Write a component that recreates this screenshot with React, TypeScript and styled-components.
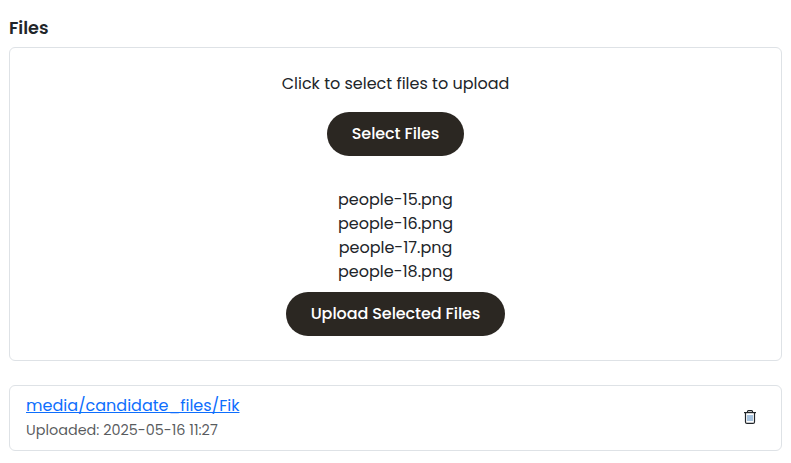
import React from "react";
import styled, { createGlobalStyle } from "styled-components";

const GlobalStyle = createGlobalStyle`
  *, *::before, *::after { box-sizing: border-box; }
  body {
    margin: 0;
    background: #fff;
    color: #212529;
    font: 400 16px/24px Poppins, Inter, sans-serif;
  }
`;

const Page = styled.main`
  padding: 16px 9px 12px;
`;

const Title = styled.h2`
  margin: 0 0 7px;
  font-size: 17.6px;
  line-height: 24px;
  font-weight: 600;
`;

const Panel = styled.section`
  border: 1px solid #dee2e6;
  border-radius: 6px;
`;

const UploadPanel = styled(Panel)`
  display: flex;
  flex-direction: column;
  align-items: center;
  height: 314px;
  padding-top: 24px;
`;

const Prompt = styled.p`
  margin: 0 0 16px;
  white-space: nowrap;
`;

const PillButton = styled.button<{ $width: number }>`
  width: ${(p) => p.$width}px;
  height: 44px;
  padding: 0;
  border: 0;
  border-radius: 22px;
  background: #2b2722;
  color: #fff;
  font: inherit;
  font-weight: 500;
  letter-spacing: -0.08px;
  white-space: nowrap;
  cursor: pointer;
`;

const SelectedFiles = styled.ul`
  margin: 32px 0 8px;
  padding: 0;
  list-style: none;
  text-align: center;
`;

const FileRow = styled(Panel)`
  display: flex;
  align-items: center;
  justify-content: space-between;
  height: 66px;
  margin-top: 24px;
  padding: 0 25px 0 16px;
`;

const FileLink = styled.a`
  display: block;
  width: max-content;
  color: #0d6efd;
  text-decoration: underline;
`;

const Uploaded = styled.small`
  display: block;
  color: rgba(33, 37, 41, 0.75);
  font-size: 14.4px;
  line-height: 24px;
`;

const DeleteButton = styled.button`
  display: flex;
  padding: 0 0 2px;
  border: 0;
  background: none;
  color: #212529;
  cursor: pointer;
`;

const TrashIcon = () => (
  <svg width="12" height="14" viewBox="0 0 12 14" fill="none" stroke="currentColor">
    <path d="M0 2.6H12" strokeWidth="1.2" />
    <path d="M3.5 2.5V1.5Q3.5 0.6 4.4 0.6H7.6Q8.5 0.6 8.5 1.5V2.5" strokeWidth="1.2" />
    <path d="M1.5 2.6V11.9Q1.5 13.4 3 13.4H9Q10.5 13.4 10.5 11.9V2.6" strokeWidth="1.2" />
    <path d="M4 5V11M6 5V11M8 5V11" stroke="#4c85bd" strokeWidth="1" />
  </svg>
);

const files = ["people-15.png", "people-16.png", "people-17.png", "people-18.png"];

export default function App() {
  return (
    <>
      <GlobalStyle />
      <Page>
        <Title>Files</Title>
        <UploadPanel>
          <Prompt>Click to select files to upload</Prompt>
          <PillButton $width={137}>Select Files</PillButton>
          <SelectedFiles>
            {files.map((name) => (
              <li key={name}>{name}</li>
            ))}
          </SelectedFiles>
          <PillButton $width={219}>Upload Selected Files</PillButton>
        </UploadPanel>
        <FileRow>
          <div>
            <FileLink href="#">media/candidate_files/Fik</FileLink>
            <Uploaded>Uploaded: 2025-05-16 11:27</Uploaded>
          </div>
          <DeleteButton aria-label="Delete file">
            <TrashIcon />
          </DeleteButton>
        </FileRow>
      </Page>
    </>
  );
}
